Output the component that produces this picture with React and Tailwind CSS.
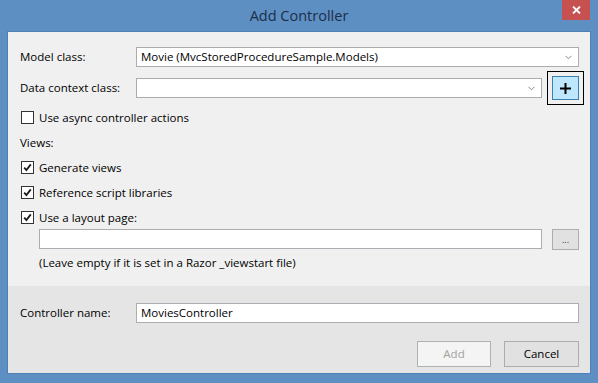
import React from 'react';

const Check = ({ checked }) => (
  <div className="w-[13px] h-[13px] border border-[#333333] bg-white flex items-center justify-center shrink-0">
    {checked && (
      <svg width="9" height="9" viewBox="0 0 9 9">
        <path d="M1.2 4.6 L3.4 7 L7.8 1.4" stroke="#1a1a1a" strokeWidth="1.8" fill="none" />
      </svg>
    )}
  </div>
);

const Chevron = () => (
  <svg width="7" height="5" viewBox="0 0 7 5" className="shrink-0">
    <path d="M0.5 0.8 L3.5 3.8 L6.5 0.8" stroke="#8a8a8a" strokeWidth="1" fill="none" />
  </svg>
);

const CheckRow = ({ checked, label }) => (
  <div className="h-[25px] flex items-center">
    <div className="ml-[1px]">
      <Check checked={checked} />
    </div>
    <span className="ml-[5px]">{label}</span>
  </div>
);

const App = () => {
  return (
    <div
      className="w-[598px] h-[383px] bg-[#5e8fc2] flex flex-col text-[11.5px] text-black overflow-hidden"
      style={{ fontFamily: '"Open Sans", "Noto Sans", sans-serif' }}
    >
      {/* Title bar */}
      <div className="h-[31px] relative flex items-start justify-center shrink-0">
        <span className="mt-[6px] text-[14.5px] text-[#1b2e4b] leading-[20px]">Add Controller</span>
        <div className="absolute left-[562px] top-0 w-[28px] h-[20px] bg-[#c75050] flex items-center justify-center">
          <svg width="9" height="8" viewBox="0 0 9 8">
            <path d="M1 0.5 L8 7.5 M8 0.5 L1 7.5" stroke="#ffffff" strokeWidth="1.8" />
          </svg>
        </div>
      </div>

      {/* Dialog body */}
      <div className="ml-[7px] w-[584px] h-[343px] border border-[#4f80b5] flex flex-col shrink-0">
        {/* Upper section */}
        <div className="h-[254px] bg-[#f0f0f0] pl-[12px] pr-[11px] pt-[15px] flex flex-col">
          <div className="h-[20px] flex items-center">
            <span className="w-[116px] shrink-0">Model class:</span>
            <div className="flex-1 h-[20px] bg-white border border-[#acacac] flex items-center pl-[4px] pr-[6px]">
              <span className="flex-1 leading-[16px]">Movie (MvcStoredProcedureSample.Models)</span>
              <Chevron />
            </div>
          </div>

          <div className="mt-[11px] h-[20px] flex items-center">
            <span className="w-[116px] shrink-0">Data context class:</span>
            <div className="flex-1 h-[20px] bg-white border border-[#acacac] flex items-center justify-end pr-[6px]">
              <Chevron />
            </div>
            <div className="ml-[5px] -mr-[5px] shrink-0 border border-black p-[4px]">
              <div className="w-[27px] h-[24px] bg-[#bee6fd] border border-[#3c7fb1] flex items-center justify-center">
                <svg width="11" height="11" viewBox="0 0 11 11">
                  <path d="M5.5 0 V11 M0 5.5 H11" stroke="#000000" strokeWidth="2" />
                </svg>
              </div>
            </div>
          </div>

          <div className="mt-[7px]">
            <CheckRow checked={false} label="Use async controller actions" />
          </div>
          <div className="h-[25px] flex items-center">Views:</div>
          <CheckRow checked label="Generate views" />
          <CheckRow checked label="Reference script libraries" />
          <CheckRow checked label="Use a layout page:" />

          <div className="-mt-[1px] ml-[19px] flex items-start">
            <div className="flex-1 h-[20px] bg-white border border-[#abadb3]" />
            <div className="ml-[10px] w-[27px] h-[21px] bg-[#e1e1e1] border border-[#adadad] flex items-center justify-center text-[9px] leading-none text-[#333333]">
              ...
            </div>
          </div>

          <div className="mt-[3px] ml-[19px] h-[20px] flex items-center">
            (Leave empty if it is set in a Razor _viewstart file)
          </div>
        </div>

        {/* Lower section */}
        <div className="flex-1 bg-[#e5e5e5] pl-[12px] pr-[11px] pt-[17px] flex flex-col">
          <div className="h-[20px] flex items-center">
            <span className="w-[116px] shrink-0">Controller name:</span>
            <div className="flex-1 h-[20px] bg-white border border-[#abadb3] flex items-center pl-[4px]">
              <span className="leading-[16px]">MoviesController</span>
            </div>
          </div>
          <div className="mt-[18px] flex justify-end">
            <div className="w-[74px] h-[26px] bg-[#f4f4f4] border border-[#adb2b5] flex items-center justify-center text-[#a2a2a2]">
              Add
            </div>
            <div className="ml-[13px] w-[75px] h-[26px] bg-[#e1e1e1] border border-[#adadad] flex items-center justify-center">
              Cancel
            </div>
          </div>
        </div>
      </div>
    </div>
  );
};

export default App;
